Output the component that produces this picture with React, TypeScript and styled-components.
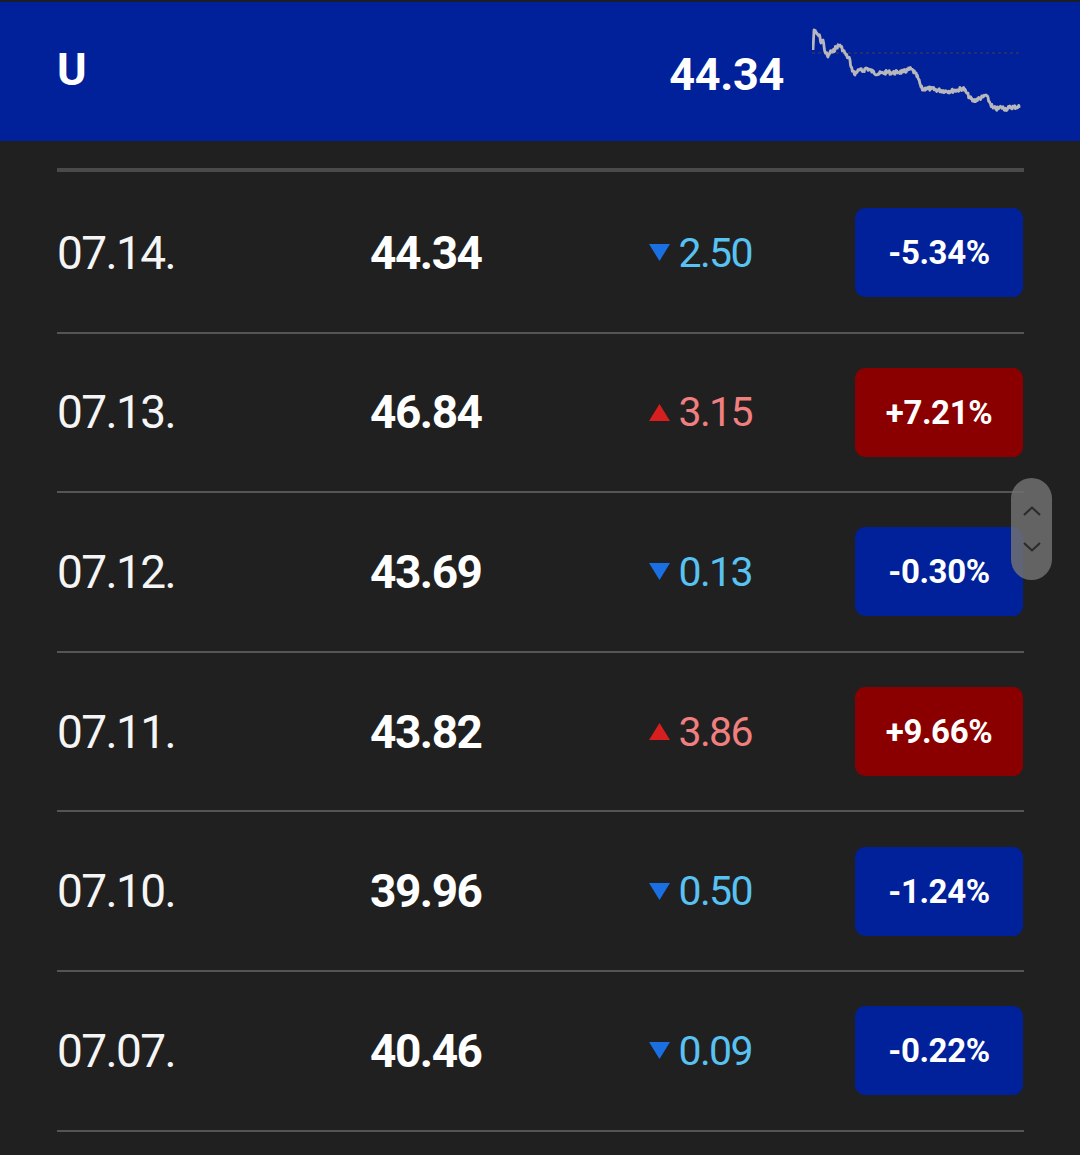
import React from "react";
import styled, { createGlobalStyle } from "styled-components";

const GlobalStyle = createGlobalStyle`
  html, body {
    margin: 0;
    padding: 0;
    background: #202020;
  }
  body {
    font-family: Roboto, "Noto Sans", "Liberation Sans", sans-serif;
    color: #f5f5f5;
  }
  * { box-sizing: border-box; }
`;

const Page = styled.div`
  width: 1080px;
  min-height: 1155px;
  background: #202020;
  position: relative;
  overflow: hidden;
`;

const TopStrip = styled.div`
  height: 2px;
  background: #1b1e28;
`;

const Header = styled.header`
  height: 139px;
  background: #00219a;
  display: flex;
  align-items: center;
  padding: 0 56px 0 57px;
`;

const Symbol = styled.div`
  font-size: 45px;
  font-weight: 700;
  color: #ffffff;
  flex: 1;
  margin-top: -4px;
`;

const HeaderPrice = styled.div`
  font-size: 45px;
  font-weight: 700;
  color: #ffffff;
  letter-spacing: -0.3px;
  margin-right: 28px;
  margin-top: 6px;
`;

const Spark = styled.svg`
  width: 212px;
  height: 90px;
  display: block;
  margin-top: 2px;
`;

const Content = styled.main`
  padding: 27px 56px 0 57px;
`;

const ThickRule = styled.div`
  height: 4px;
  background: #4a4a4a;
  margin-bottom: 2px;
`;

const Row = styled.div`
  height: 159.6px;
  display: grid;
  grid-template-columns: 314px 111px 270px 103px 168px;
  align-items: center;
  border-bottom: 2px solid #555555;
`;

const DateCell = styled.div`
  font-size: 46px;
  font-weight: 400;
  color: #f5f5f5;
  letter-spacing: -1.6px;
`;

const PriceCell = styled.div`
  font-size: 46px;
  font-weight: 700;
  color: #ffffff;
  letter-spacing: -1.5px;
  justify-self: end;
  margin-right: 0.5px;
`;

const ChangeCell = styled.div<{ $up: boolean }>`
  justify-self: end;
  display: flex;
  align-items: center;
  gap: 8px;
  font-size: 41px;
  font-weight: 400;
  letter-spacing: -1.6px;
  color: ${(p) => (p.$up ? "#f07f7f" : "#58c2f2")};
`;

const Tri = styled.svg`
  width: 21px;
  height: 17px;
  display: block;
`;

const Badge = styled.div<{ $up: boolean }>`
  grid-column: 5;
  height: 89px;
  border-radius: 10px;
  background: ${(p) => (p.$up ? "#8a0000" : "#00219a")};
  color: #ffffff;
  font-size: 33px;
  font-weight: 700;
  letter-spacing: -0.4px;
  display: flex;
  align-items: center;
  justify-content: center;
`;

const ScrollPill = styled.div`
  position: absolute;
  left: 1011px;
  top: 478px;
  width: 41px;
  height: 102px;
  border-radius: 21px;
  background: rgba(112, 112, 112, 0.85);
  display: flex;
  flex-direction: column;
  align-items: center;
  justify-content: center;
  gap: 26px;
`;

const Chevron = styled.svg`
  width: 18px;
  height: 10px;
  display: block;
`;

type Item = { date: string; price: string; change: string; pct: string; up: boolean };

const rows: Item[] = [
  { date: "07.14.", price: "44.34", change: "2.50", pct: "-5.34%", up: false },
  { date: "07.13.", price: "46.84", change: "3.15", pct: "+7.21%", up: true },
  { date: "07.12.", price: "43.69", change: "0.13", pct: "-0.30%", up: false },
  { date: "07.11.", price: "43.82", change: "3.86", pct: "+9.66%", up: true },
  { date: "07.10.", price: "39.96", change: "0.50", pct: "-1.24%", up: false },
  { date: "07.07.", price: "40.46", change: "0.09", pct: "-0.22%", up: false },
];

// key points of the sparkline in local coords (origin at 814,28)
const keyPts: [number, number][] = [
  [1, 22], [2, 2], [4, 5], [6, 7], [8, 9], [9, 15], [11, 12], [13, 24], [14, 25],
  [16, 29], [18, 24], [21, 24], [24, 19], [28, 17], [31, 22], [34, 27], [38, 32],
  [39, 39], [43, 47], [44, 44], [48, 42], [51, 43], [54, 40], [58, 42], [61, 44],
  [66, 46], [71, 45], [76, 44], [81, 45], [86, 44], [91, 44], [96, 42], [99, 41],
  [103, 45], [106, 50], [109, 59], [111, 62], [114, 60], [119, 61], [126, 62],
  [133, 63], [139, 63], [146, 62], [151, 60], [154, 64], [158, 70], [161, 73],
  [166, 71], [171, 69], [174, 67], [178, 75], [181, 80], [186, 81], [189, 79],
  [194, 81], [199, 79], [204, 79], [208, 78],
];

function buildSpark(): string {
  const pts: string[] = [];
  let seed = 7;
  const rnd = () => {
    seed = (seed * 9301 + 49297) % 233280;
    return seed / 233280;
  };
  for (let i = 0; i < keyPts.length - 1; i++) {
    const [x0, y0] = keyPts[i];
    const [x1, y1] = keyPts[i + 1];
    const steps = Math.max(1, Math.round((x1 - x0) * 1.6));
    for (let s = 0; s < steps; s++) {
      const t = s / steps;
      const x = x0 + (x1 - x0) * t;
      const y = y0 + (y1 - y0) * t + (s === 0 ? 0 : (rnd() - 0.5) * 4);
      pts.push(`${x.toFixed(2)},${y.toFixed(2)}`);
    }
  }
  const last = keyPts[keyPts.length - 1];
  pts.push(`${last[0]},${last[1]}`);
  return "M" + pts.join(" L");
}

const sparkPath = buildSpark();

export default function App() {
  return (
    <Page>
      <GlobalStyle />
      <TopStrip />
      <Header>
        <Symbol>U</Symbol>
        <HeaderPrice>44.34</HeaderPrice>
        <Spark viewBox="0 0 212 90">
          <line x1="0" y1="25" x2="210" y2="25" stroke="#2f3566" strokeWidth="1.5" strokeDasharray="3 3" />
          <path d={sparkPath} fill="none" stroke="#b8b8bc" strokeWidth="2.8" strokeLinejoin="round" />
        </Spark>
      </Header>
      <Content>
        <ThickRule />
        {rows.map((r) => (
          <Row key={r.date}>
            <DateCell>{r.date}</DateCell>
            <PriceCell>{r.price}</PriceCell>
            <ChangeCell $up={r.up}>
              <Tri viewBox="0 0 21 17">
                {r.up ? (
                  <polygon points="10.5,0 21,17 0,17" fill="#d81f1f" />
                ) : (
                  <polygon points="0,0 21,0 10.5,17" fill="#1a6fe3" />
                )}
              </Tri>
              {r.change}
            </ChangeCell>
            <Badge $up={r.up}>{r.pct}</Badge>
          </Row>
        ))}
      </Content>
      <ScrollPill>
        <Chevron viewBox="0 0 18 10">
          <polyline points="1,9 9,1.5 17,9" fill="none" stroke="#2a2a2a" strokeWidth="2" />
        </Chevron>
        <Chevron viewBox="0 0 18 10">
          <polyline points="1,1 9,8.5 17,1" fill="none" stroke="#2a2a2a" strokeWidth="2" />
        </Chevron>
      </ScrollPill>
    </Page>
  );
}
